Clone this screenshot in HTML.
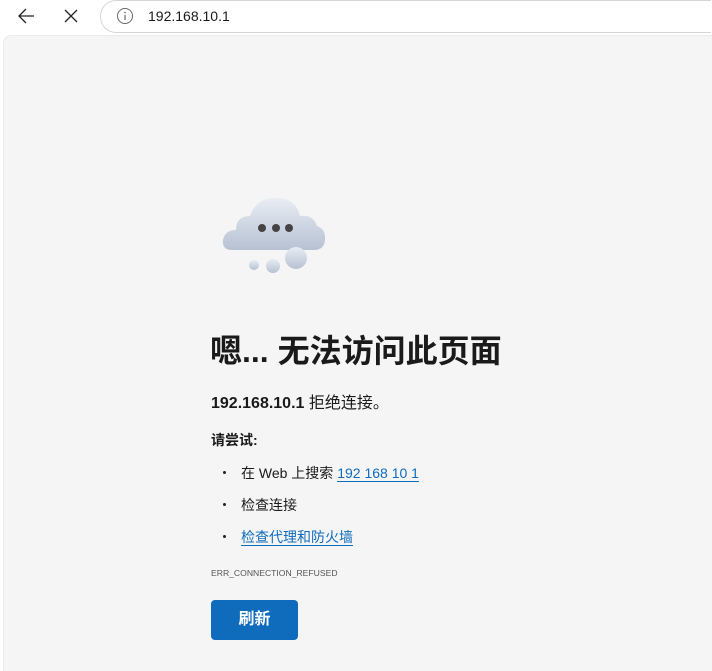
<!DOCTYPE html>
<html style="height:671px;overflow:hidden"><head><meta charset="utf-8"><style>
body{margin:0;width:712px;height:671px;background:#fff;font-family:"Liberation Sans","Noto Sans CJK SC",sans-serif;overflow:hidden;position:relative}
.url{position:absolute;left:100px;top:0px;width:610px;height:31px;border:1px solid #d6d6d6;border-right:none;border-radius:16px 0 0 16px;background:#fff}
.page{position:absolute;left:3px;top:35px;width:708px;height:636px;background:#f5f5f5;border-top:1px solid #ebebeb;border-left:1px solid #ebebeb;border-radius:8px 0 0 0}
.t{position:absolute;color:#1a1a1a;white-space:nowrap}
a{color:#0f6cbd;text-decoration:none;border-bottom:1px solid #0f6cbd}
.dot{position:absolute;left:223px;width:3px;height:3px;border-radius:2px;background:#222}
</style></head><body>
<svg style="position:absolute;left:16px;top:7px" width="20" height="18"><path d="M18 9H3M10 2L3 9l7 7" fill="none" stroke="#222" stroke-width="1.3"/></svg>
<svg style="position:absolute;left:64px;top:9px" width="14" height="14"><path d="M1 1l12 12M13 1L1 13" stroke="#222" stroke-width="1.3"/></svg>
<div class="url"></div>
<svg style="position:absolute;left:116px;top:7px" width="18" height="18"><circle cx="9" cy="9" r="7.5" fill="none" stroke="#666" stroke-width="1"/><path d="M9 8v5" stroke="#666" stroke-width="1.2"/><circle cx="9" cy="5.6" r=".8" fill="#666"/></svg>
<div class="t" style="left:148px;top:8px;font-size:14px">192.168.10.1</div>
<div class="page"></div>
<svg style="position:absolute;left:220px;top:192px" width="110" height="82">
<defs><linearGradient id="g" x1="0" y1="0" x2="0" y2="1"><stop offset="0" stop-color="#e8edf4"/><stop offset="1" stop-color="#b6c1d2"/></linearGradient></defs>
<path d="M12 58 Q2 58 3 48 Q5 38 16 38 Q16 24 30 24 Q36 6 56 6 Q76 6 80 24 Q93 22 97 34 Q106 37 105 48 Q104 58 94 58 Z" fill="url(#g)"/>
<circle cx="42" cy="36" r="4" fill="#444"/><circle cx="56" cy="36" r="4" fill="#444"/><circle cx="69" cy="36" r="4" fill="#444"/>
<circle cx="76" cy="66" r="11" fill="url(#g)"/><circle cx="53" cy="74" r="7" fill="url(#g)"/><circle cx="34" cy="73" r="5" fill="url(#g)"/>
</svg>
<div class="t" style="left:210px;top:326px;font-size:32px;font-weight:bold">嗯... 无法访问此页面</div>
<div class="t" style="left:211px;top:389px;font-size:16px"><b>192.168.10.1</b> 拒绝连接。</div>
<div class="t" style="left:211px;top:430px;font-size:14px;font-weight:bold">请尝试:</div>
<div class="dot" style="top:471px"></div><div class="dot" style="top:503px"></div><div class="dot" style="top:535px"></div>
<div class="t" style="left:241px;top:463px;font-size:14px">在 Web 上搜索 <a>192 168 10 1</a></div>
<div class="t" style="left:241px;top:495px;font-size:14px">检查连接</div>
<div class="t" style="left:241px;top:527px;font-size:14px"><a>检查代理和防火墙</a></div>
<div class="t" style="left:211px;top:568px;font-size:8.6px;color:#555">ERR_CONNECTION_REFUSED</div>
<div style="position:absolute;left:211px;top:600px;width:87px;height:40px;background:#0f6cbd;border-radius:4px;color:#fff;font-size:16px;font-weight:bold;text-align:center;line-height:40px">刷新</div>
</body></html>
